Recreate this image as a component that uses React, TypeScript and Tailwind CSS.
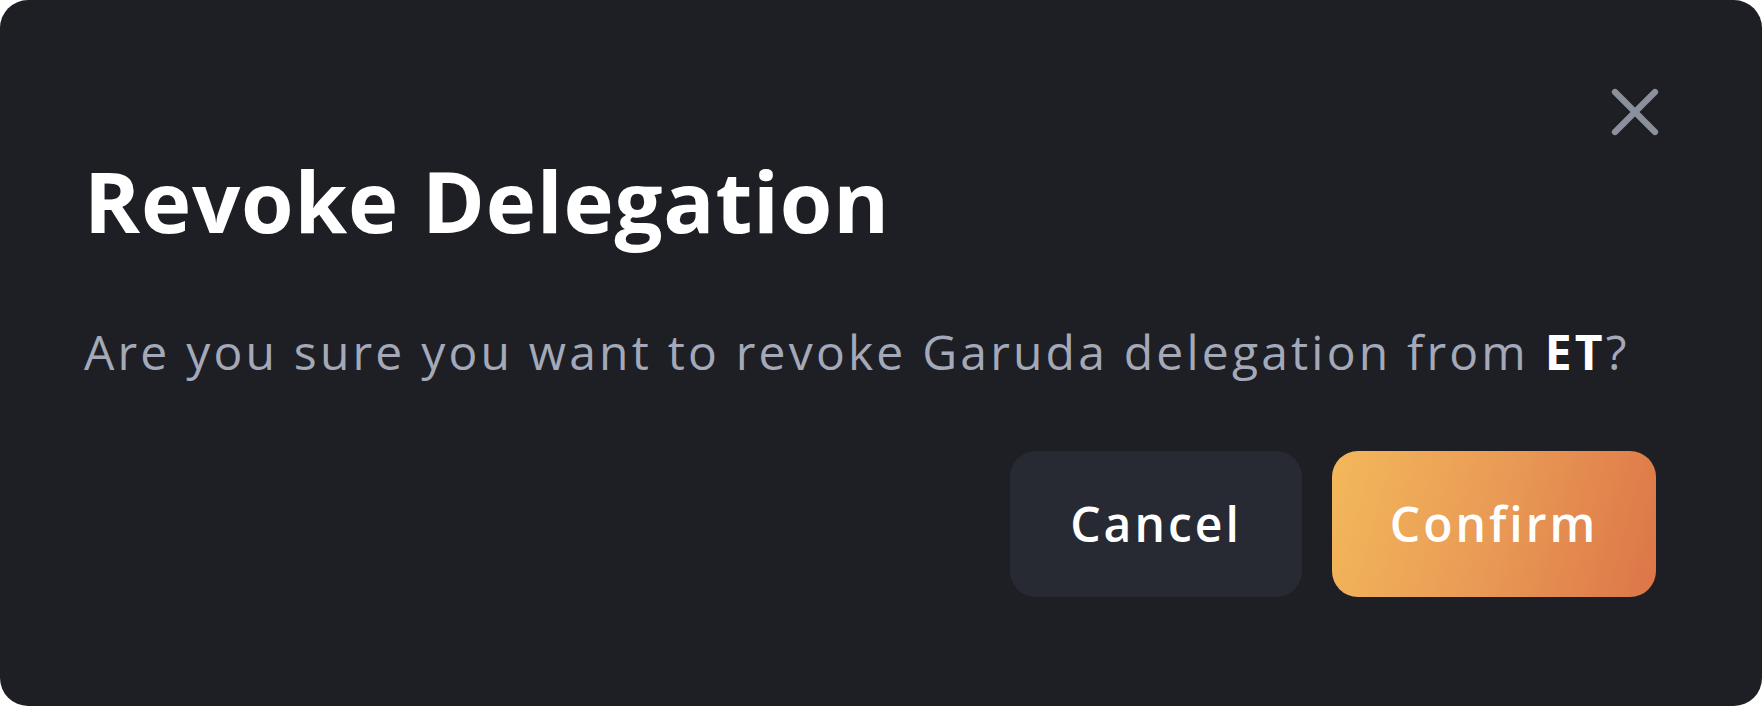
import { X } from 'lucide-react';

export default function App() {
  return (
    <div className="w-[1764px] h-[708px] bg-white" style={{ fontFamily: '"Open Sans", "Noto Sans", sans-serif' }}>
      <div className="relative w-[1762px] h-[706px] rounded-[28px] bg-[#1e1f24] pl-[84px] pr-[106px] pt-[158px]">
        <button
          type="button"
          className="absolute left-[1595px] top-[72px] w-[80px] h-[80px] flex items-center justify-center text-[#8b909d]"
        >
          <X size={80} strokeWidth={1.9} />
        </button>

        <h1 className="text-[85px] leading-none font-bold text-white tracking-[0.8px]">Revoke Delegation</h1>

        <p className="mt-[85px] text-[48px] leading-none text-[#a3a9b8] tracking-[3.2px]">
          Are you sure you want to revoke Garuda delegation from{' '}
          <span className="font-bold text-white">ET</span>?
        </p>

        <div className="mt-[75px] flex justify-end gap-[30px]">
          <button
            type="button"
            className="w-[292px] h-[146px] rounded-[26px] bg-[#282a33] text-white text-[48px] font-semibold tracking-[3px]"
          >
            Cancel
          </button>
          <button
            type="button"
            className="w-[324px] h-[146px] rounded-[26px] bg-[linear-gradient(105deg,#f3b85b_0%,#e99a55_50%,#dc7548_100%)] text-white text-[48px] font-semibold tracking-[3px]"
          >
            Confirm
          </button>
        </div>
      </div>
    </div>
  );
}
